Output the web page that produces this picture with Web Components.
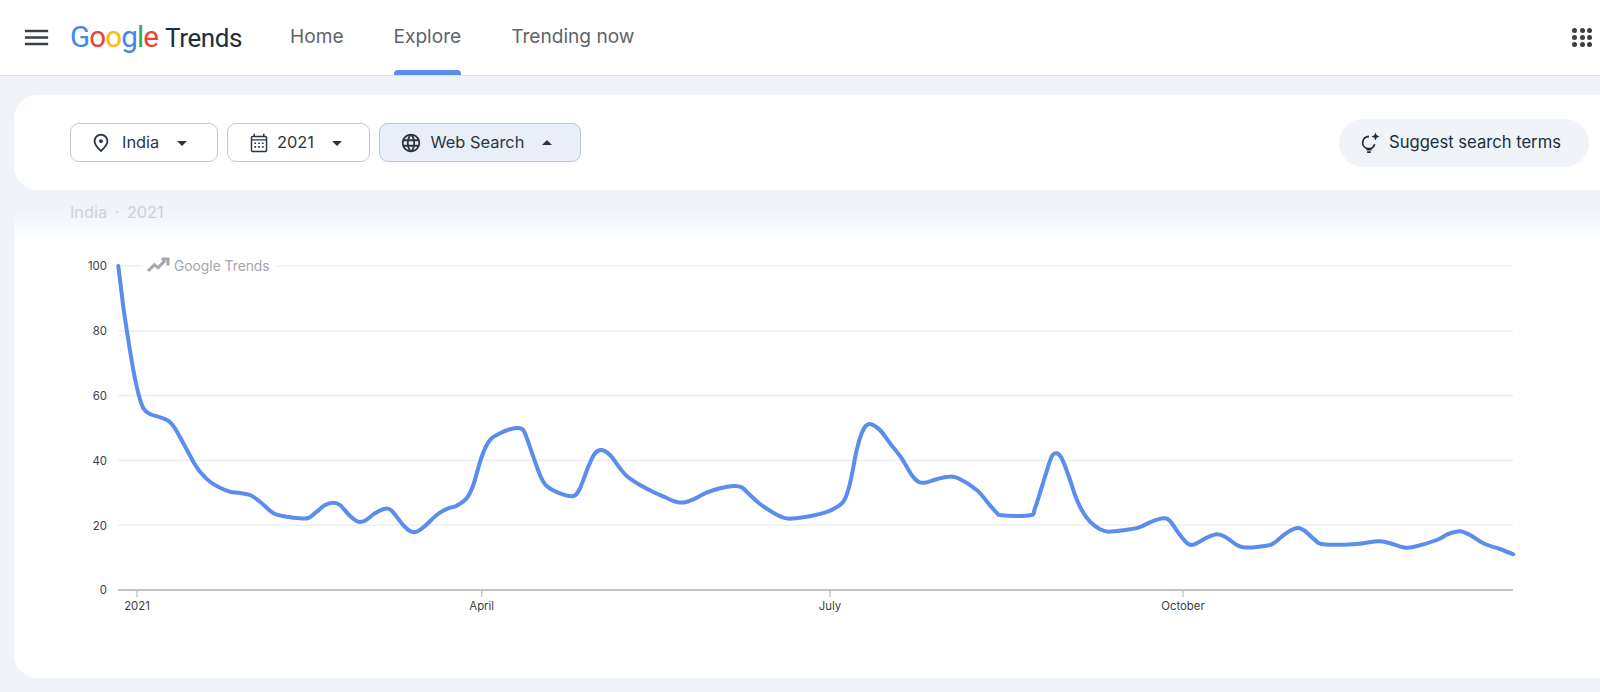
<!DOCTYPE html>
<html lang="en"><head><meta charset="utf-8"><title>Google Trends</title>
<style>
html,body{margin:0;padding:0;height:692px;overflow:hidden;background:#f0f4f9;font-family:Inter,Roboto,"Liberation Sans",sans-serif}
</style></head><body>
<trends-app>
  <trends-header slot="header"></trends-header>
  <filter-card slot="filters">
    <filter-chip icon="pin" style="width:147.5px;--gap:10px;--after:11px">India</filter-chip>
    <filter-chip icon="cal" style="width:143px;--gap:7.5px;--after:11px">2021</filter-chip>
    <filter-chip icon="globe" active style="width:202px;--gap:9px;--after:11px">Web Search</filter-chip>
    <suggest-button slot="end">Suggest search terms</suggest-button>
  </filter-card>
  <chart-card slot="chart" caption="India · 2021"></chart-card>
</trends-app>
<script>
const ICONS={
 menu:'<path d="M3 18h18v-2H3v2zm0-5h18v-2H3v2zm0-7v2h18V6H3z"/>',
 pin:'<path d="M12 12c-1.1 0-2-.9-2-2s.9-2 2-2 2 .9 2 2-.9 2-2 2zm6-1.8C18 6.57 15.35 4 12 4s-6 2.57-6 6.2c0 2.34 1.95 5.44 6 9.14 4.05-3.7 6-6.8 6-9.14zM12 2c4.2 0 8 3.22 8 8.2 0 3.32-2.67 7.25-8 11.8-5.33-4.55-8-8.48-8-11.8C4 5.22 7.8 2 12 2z"/>',
 cal:'<path d="M19 4h-1V2h-1.6v2H7.6V2H6v2H5c-1.1 0-2 .9-2 2v14c0 1.1.9 2 2 2h14c1.1 0 2-.9 2-2V6c0-1.1-.9-2-2-2zm.4 16c0 .2-.2.4-.4.4H5c-.2 0-.4-.2-.4-.4V9.4h14.8V20zM4.6 7.8V6c0-.2.2-.4.4-.4h14c.2 0 .4.2.4.4v1.8z"/><path d="M7 11.4h1.8v1.8H7zM11.1 11.4h1.8v1.8h-1.8zM15.2 11.4H17v1.8h-1.8zM7 15.4h1.8v1.8H7zM11.1 15.4h1.8v1.8h-1.8zM15.2 15.4H17v1.8h-1.8z"/>',
 globe:'<path d="M11.99 2C6.47 2 2 6.48 2 12s4.47 10 9.99 10C17.52 22 22 17.52 22 12S17.52 2 11.99 2zm6.93 6h-2.95c-.32-1.25-.78-2.45-1.38-3.56 1.84.63 3.37 1.91 4.33 3.56zM12 4.04c.83 1.2 1.48 2.53 1.91 3.96h-3.82c.43-1.43 1.08-2.76 1.91-3.96zM4.26 14C4.1 13.36 4 12.69 4 12s.1-1.36.26-2h3.38c-.08.66-.14 1.32-.14 2s.06 1.34.14 2H4.26zm.82 2h2.95c.32 1.25.78 2.45 1.38 3.56-1.84-.63-3.37-1.9-4.33-3.56zm2.95-8H5.08c.96-1.66 2.49-2.93 4.33-3.56C8.81 5.55 8.35 6.75 8.03 8zM12 19.96c-.83-1.2-1.48-2.53-1.91-3.96h3.82c-.43 1.43-1.08 2.76-1.91 3.96zM14.34 14H9.66c-.09-.66-.16-1.32-.16-2s.07-1.35.16-2h4.68c.09.65.16 1.32.16 2s-.07 1.34-.16 2zm.25 5.56c.6-1.11 1.06-2.31 1.38-3.56h2.95c-.96 1.65-2.49 2.93-4.33 3.56zM16.36 14c.08-.66.14-1.32.14-2s-.06-1.34-.14-2h3.38c.16.64.26 1.31.26 2s-.1 1.36-.26 2h-3.38z"/>',
 spark:'<path d="M11 4.6a7 7 0 1 0 6.6 8.6h-1.9A5.2 5.2 0 1 1 11 6.4z"/><path d="M8.4 17.6h5.2v1.9H8.4zM9.2 20.3h3.6V22H9.2z"/><path d="M17.5 1.5l1.2 2.8 2.8 1.2-2.8 1.2-1.2 2.8-1.2-2.8-2.8-1.2 2.8-1.2z"/>',
 down:'<path d="M7 10l5 5 5-5z"/>',
 up:'<path d="M7 14l5-5 5 5z"/>'
};
const svg=(n,s,c='currentColor')=>`<svg width="${s}" height="${s}" viewBox="0 0 24 24" fill="${c}" style="display:block;flex:none" aria-hidden="true">${ICONS[n]}</svg>`;
const def=(name,html,extra)=>customElements.define(name,class extends HTMLElement{
  constructor(){super();this.attachShadow({mode:'open'}).innerHTML=typeof html==='function'?html(this):html;}
  connectedCallback(){
    if(typeof html==='function')this.shadowRoot.innerHTML=html(this);
    extra&&extra(this);
  }
});

def('trends-app',`<style>
:host{display:flex;flex-direction:column;width:1600px;height:692px;overflow:hidden}
.main{display:flex;flex-direction:column;padding:19px 0 0 13.5px}
</style><slot name="header"></slot><div class="main"><slot name="filters"></slot><slot name="chart"></slot></div>`);

def('nav-tab',`<style>
:host{display:flex;flex-direction:column;height:75px;color:#5f6368;font:400 19.1px/75px Inter,Roboto,sans-serif}
:host([active]) .bar{background:#5b8def}
.t{height:70px;line-height:72px;white-space:nowrap}
.bar{height:5px;border-radius:4px 4px 0 0}
</style><div class="t"><slot></slot></div><div class="bar"></div>`);

def('trends-logo',`<style>
:host{display:flex;align-items:baseline;white-space:nowrap;line-height:1}
.g{font:400 29.6px/1 Roboto,Lato,sans-serif;letter-spacing:-.9px}
.t{font:400 26px/1 Roboto,sans-serif;color:#202d3d;margin-left:7px;letter-spacing:-.4px}
.b{color:#4285f4}.r{color:#ea4335}.y{color:#fbbc05}.gr{color:#34a853}
</style><span class="g"><span class="b">G</span><span class="r">o</span><span class="y">o</span><span class="b">g</span><span class="gr">l</span><span class="r">e</span></span><span class="t">Trends</span>`);

def('trends-header',`<style>
:host{display:flex;align-items:center;height:75px;background:#fff;border-bottom:1px solid #dfe3ea;padding:0 8px 0 21px;flex:none}
.m{color:#3c4043;margin-right:18px}
nav{display:flex;gap:50px;margin-left:48px}
.apps{margin-left:auto;display:grid;grid-template-columns:repeat(3,5px);gap:2.4px}
.apps i{width:5px;height:5px;border-radius:50%;background:#3c4043}
</style><div class="m">${svg('menu',31)}</div><trends-logo></trends-logo>
<nav><nav-tab>Home</nav-tab><nav-tab active>Explore</nav-tab><nav-tab>Trending now</nav-tab></nav>
<div class="apps">${'<i></i>'.repeat(9)}</div>`);

def('filter-card',`<style>
:host{display:flex;align-items:center;gap:9px;height:95px;background:#fff;border-radius:24px 0 0 24px;padding:0 11px 0 56.5px;position:relative;z-index:1;box-sizing:border-box}
.e{margin-left:auto}
</style><slot></slot><div class="e"><slot name="end"></slot></div>`);

def('filter-chip',h=>{
 const a=h.hasAttribute('active');
 return `<style>
:host{display:block;box-sizing:border-box;height:39px;border:1px solid ${a?'#bcc6d6':'#c6c9ce'};border-radius:9px;background:${a?'#e8eff9':'#fff'};color:#2b3644;font:400 16.4px/37px Inter,Roboto,sans-serif}
.w{display:flex;align-items:center;height:100%;padding-left:${h.getAttribute('icon')=='pin'?'19px':'20px'}}
.l{margin-left:var(--gap);margin-right:var(--after);white-space:nowrap}
</style><div class="w">${svg(h.getAttribute('icon'),22)}<span class="l"><slot></slot></span>${svg(a?'up':'down',24)}</div>`;});

def('suggest-button',`<style>
:host{display:flex;align-items:center;box-sizing:border-box;width:250px;height:48px;border-radius:24px;background:#f0f4f9;color:#202d3d;padding-left:19px;gap:7px;font:400 16.6px/1 Inter,Roboto,sans-serif;white-space:nowrap}
</style>${svg('spark',24)}<span><slot></slot></span>`);

const P4=[[175,78],[190,200],[205,300],[220,390],[235,460],[250,505],[270,522],[300,532],[325,542],[345,565],[370,610],[400,665],[420,695],[450,725],[480,743],[510,755],[540,759],[570,765],[600,785],[630,812],[650,824],[680,830],[710,834],[745,834],[770,815],[795,795],[820,788],[840,795],[870,828],[895,845],[915,842],[945,820],[975,806],[995,812],[1025,850],[1050,873],[1070,875],[1095,858],[1130,825],[1160,807],[1190,797],[1220,775],[1240,735],[1265,650],[1290,600],[1320,580],[1350,568],[1380,565],[1395,580],[1420,650],[1440,705],[1460,738]];
const P5=[[0,340],[40,348],[60,325],[85,260],[105,220],[125,210],[150,225],[175,258],[200,288],[235,312],[280,336],[320,354],[350,366],[375,367],[400,358],[440,338],[480,325],[520,318],[545,322],[570,345],[600,372],[640,398],[670,413],[690,416],[730,412],[770,404],[810,392],[850,365],[870,310],[890,210],[905,160],[920,135],[935,133],[960,150],[990,190],[1025,235],[1055,285],[1075,305],[1095,308],[1130,298],[1165,290],[1195,295],[1250,330],[1285,370],[1310,398],[1325,406],[1410,406],[1425,385]];
const P6=[[15,170],[35,110],[50,100],[65,115],[85,165],[105,225],[125,270],[150,305],[180,328],[205,335],[250,331],[295,323],[335,305],[370,295],[390,303],[420,345],[445,372],[465,372],[500,353],[530,343],[555,350],[590,375],[610,382],[650,381],[695,373],[725,350],[750,332],[775,324],[795,333],[825,360],[850,373],[940,373],[1015,364],[1050,370],[1090,382],[1120,381],[1190,360],[1225,342],[1260,334],[1290,345],[1330,370],[1380,387],[1420,403]];
const pts=[...P4.map(([x,y])=>[60+x/3,240+y/3]),...P5.map(([x,y])=>[560+x/3,380+y/3]),...P6.map(([x,y])=>[1040+x/3,420+y/3])];
function smooth(p){let d=`M${p[0][0].toFixed(1)} ${p[0][1].toFixed(1)}`;
 for(let i=0;i<p.length-1;i++){const a=p[Math.max(i-1,0)],b=p[i],c=p[i+1],e=p[Math.min(i+2,p.length-1)];
  d+=`C${(b[0]+(c[0]-a[0])/6).toFixed(1)} ${(b[1]+(c[1]-a[1])/6).toFixed(1)} ${(c[0]-(e[0]-b[0])/6).toFixed(1)} ${(c[1]-(e[1]-b[1])/6).toFixed(1)} ${c[0].toFixed(1)} ${c[1].toFixed(1)}`;}
 return d;}
const Y=v=>590-v*3.24;
const grid=[80,60,40,20].map(v=>`<line x1="118" x2="1513" y1="${Y(v)}" y2="${Y(v)}"/>`).join('');
const yl=[100,80,60,40,20,0].map(v=>`<text x="107" y="${Y(v)+4.3}" text-anchor="end">${v}</text>`).join('');
const xl=[[137,'2021'],[481.7,'April'],[830,'July'],[1183,'October']].map(([x,t])=>`<line class="tick" x1="${x}" x2="${x}" y1="590" y2="597"/><text x="${x}" y="609.5" text-anchor="middle">${t}</text>`).join('');

def('chart-card',h=>`<style>
:host{display:block;box-sizing:border-box;height:488px;background:linear-gradient(#f0f4f9 0,#f0f4f9 22px,#fff 52px);border-radius:0 0 0 24px;}
.cap{height:43px;padding:0 0 0 56.5px;font:400 16.3px/44px Inter,Roboto,sans-serif;color:#ccd1d8;word-spacing:3px;box-sizing:border-box}
svg{display:block;font:400 11.4px Inter,Roboto,sans-serif;fill:#3c4043}
.grid line{stroke:#e9ebef;stroke-width:1.2}
.tick{stroke:#b7babf;stroke-width:1.2}
.wm{font-size:13.8px;fill:#a3a6aa}
</style><div class="cap">${h.getAttribute('caption')||''}</div>
<svg width="1586.5" height="445" viewBox="14 233 1586.5 445" aria-label="Interest over time">
<g class="grid"><line x1="118" x2="142" y1="266" y2="266"/><line x1="277" x2="1513" y1="266" y2="266"/>${grid}</g>
<line x1="118" x2="1513" y1="590" y2="590" stroke="#aeb1b6" stroke-width="1.5"/>
${yl}${xl}
<path d="M148 271l6.4-6.2 3.6 3 7-7.2M161.5 259h6.5v6.5" fill="none" stroke="#a3a6aa" stroke-width="3"/>
<text class="wm" x="174" y="270.5">Google Trends</text>
<path d="${smooth(pts)}" fill="none" stroke="#5b8def" stroke-width="4" stroke-linecap="round" stroke-linejoin="round"/>
</svg>`);
</script>
</body></html>
